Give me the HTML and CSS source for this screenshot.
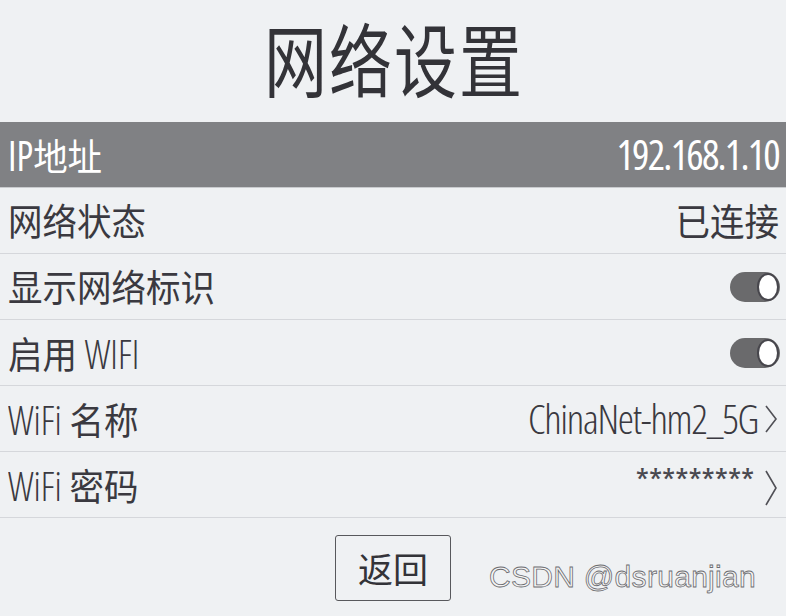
FILE: index.html
```html
<!DOCTYPE html>
<html lang="zh-CN">
<head>
<meta charset="utf-8">
<title>网络设置</title>
<link rel="stylesheet" href="styles.css">
</head>
<body>
<div class="screen">
  <header class="header">
    <h1 class="title">网络设置</h1>
  </header>
  <ul class="list">
    <li class="row active">
      <span class="label"><span class="lat">IP</span>地址</span>
      <span class="val">192.168.1.10</span>
    </li>
    <li class="row">
      <span class="label">网络状态</span>
      <span class="val cjk">已连接</span>
    </li>
    <li class="row">
      <span class="label">显示网络标识</span>
      <span class="switch on"><span class="knob"></span></span>
    </li>
    <li class="row">
      <span class="label">启用 <span class="lat">WIFI</span></span>
      <span class="switch on"><span class="knob"></span></span>
    </li>
    <li class="row">
      <span class="label"><span class="lat">WiFi</span> 名称</span>
      <span class="val-group">
        <span class="val">ChinaNet-hm2_5G</span>
        <svg class="chev" width="14" height="28" viewBox="0 0 14 28"><path d="M2 1 L12 14 L2 27" fill="none" stroke="#505056" stroke-width="1.6"/></svg>
      </span>
    </li>
    <li class="row">
      <span class="label"><span class="lat">WiFi</span> 密码</span>
      <span class="val-group">
        <span class="val stars">*********</span>
        <svg class="chev tall" width="14" height="36" viewBox="0 0 14 36"><path d="M2 1 L12 18 L2 35" fill="none" stroke="#505056" stroke-width="1.6"/></svg>
      </span>
    </li>
  </ul>
  <footer class="footer">
    <button class="back" type="button">返回</button>
    <span class="watermark">CSDN @dsruanjian</span>
  </footer>
</div>
</body>
</html>
```
FILE: styles.css
```css
html, body {
  margin: 0;
  padding: 0;
  background: #eff1f3;
}

.screen {
  width: 786px;
  height: 616px;
  display: flex;
  flex-direction: column;
  background: #eff1f3;
  color: #3a3940;
  font-family: "Noto Sans CJK SC", "Open Sans", sans-serif;
  overflow: hidden;
  position: relative;
}

.header {
  height: 122px;
  display: flex;
  align-items: center;
  justify-content: center;
  box-sizing: border-box;
  padding-bottom: 10px;
}

.title {
  margin: 0;
  font-size: 63px;
  font-weight: 400;
  letter-spacing: 2px;
  color: #333338;
  line-height: 1;
  display: inline-block;
  transform: scaleY(1.26);
  padding-left: 2px;
}

.list {
  list-style: none;
  margin: 0;
  padding: 0;
}

.row {
  height: 65px;
  border-bottom: 1px solid #d5d7db;
  display: flex;
  align-items: center;
  justify-content: space-between;
  padding: 0 7px 0 8px;
  box-sizing: content-box;
}

.row.active {
  background: #808184;
  color: #ffffff;
  border-bottom-color: #c9cbce;
}

.label {
  font-size: 34.5px;
  line-height: 1;
  white-space: nowrap;
  display: inline-block;
  transform: scaleY(1.08);
}

.lat {
  font-family: "Open Sans", sans-serif;
  font-stretch: 75%;
  font-weight: 300;
  font-size: 38px;
}

.active .lat {
  font-weight: 400;
}

.val {
  font-family: "Open Sans", "Noto Sans CJK SC", sans-serif;
  font-stretch: 75%;
  font-weight: 300;
  font-size: 41px;
  letter-spacing: -1.3px;
  line-height: 1;
  white-space: nowrap;
}

.active .val {
  font-weight: 400;
  letter-spacing: -1.8px;
}

.val.cjk {
  font-family: "Noto Sans CJK SC", sans-serif;
  font-weight: 400;
  font-size: 34.5px;
  letter-spacing: 0;
  display: inline-block;
  transform: scaleY(1.08);
}

.val-group {
  display: flex;
  align-items: center;
  gap: 6px;
}

.stars {
  font-size: 35px;
  font-weight: 400;
  letter-spacing: -0.5px;
  color: #4a4950;
  margin-top: -8px;
}

.chev {
  display: block;
  margin-right: 1px;
}

.chev.tall {
  margin-top: 6px;
  margin-left: 4px;
}

.switch {
  width: 50px;
  height: 30px;
  border-radius: 15px;
  background: #6a6a6c;
  position: relative;
  margin-right: -1px;
}

.knob {
  position: absolute;
  right: 1px;
  top: 1px;
  width: 18px;
  height: 24px;
  border-radius: 50%;
  background: #ffffff;
  border: 2px solid #47464c;
}

.footer {
  flex: 1;
  display: flex;
  justify-content: center;
  align-items: flex-start;
  padding-top: 17px;
}

.back {
  width: 116px;
  height: 66px;
  border: 1px solid #58585c;
  border-radius: 3px;
  background: transparent;
  color: #333338;
  font-family: "Noto Sans CJK SC", sans-serif;
  font-size: 35px;
  padding: 0 0 2px 0;
  line-height: 1;
}

.watermark {
  position: absolute;
  left: 489px;
  top: 560px;
  font-family: "Liberation Sans", sans-serif;
  font-size: 30px;
  letter-spacing: 0.3px;
  color: #f5f5f5;
  -webkit-text-stroke: 0.8px #6c6c70;
}
```
